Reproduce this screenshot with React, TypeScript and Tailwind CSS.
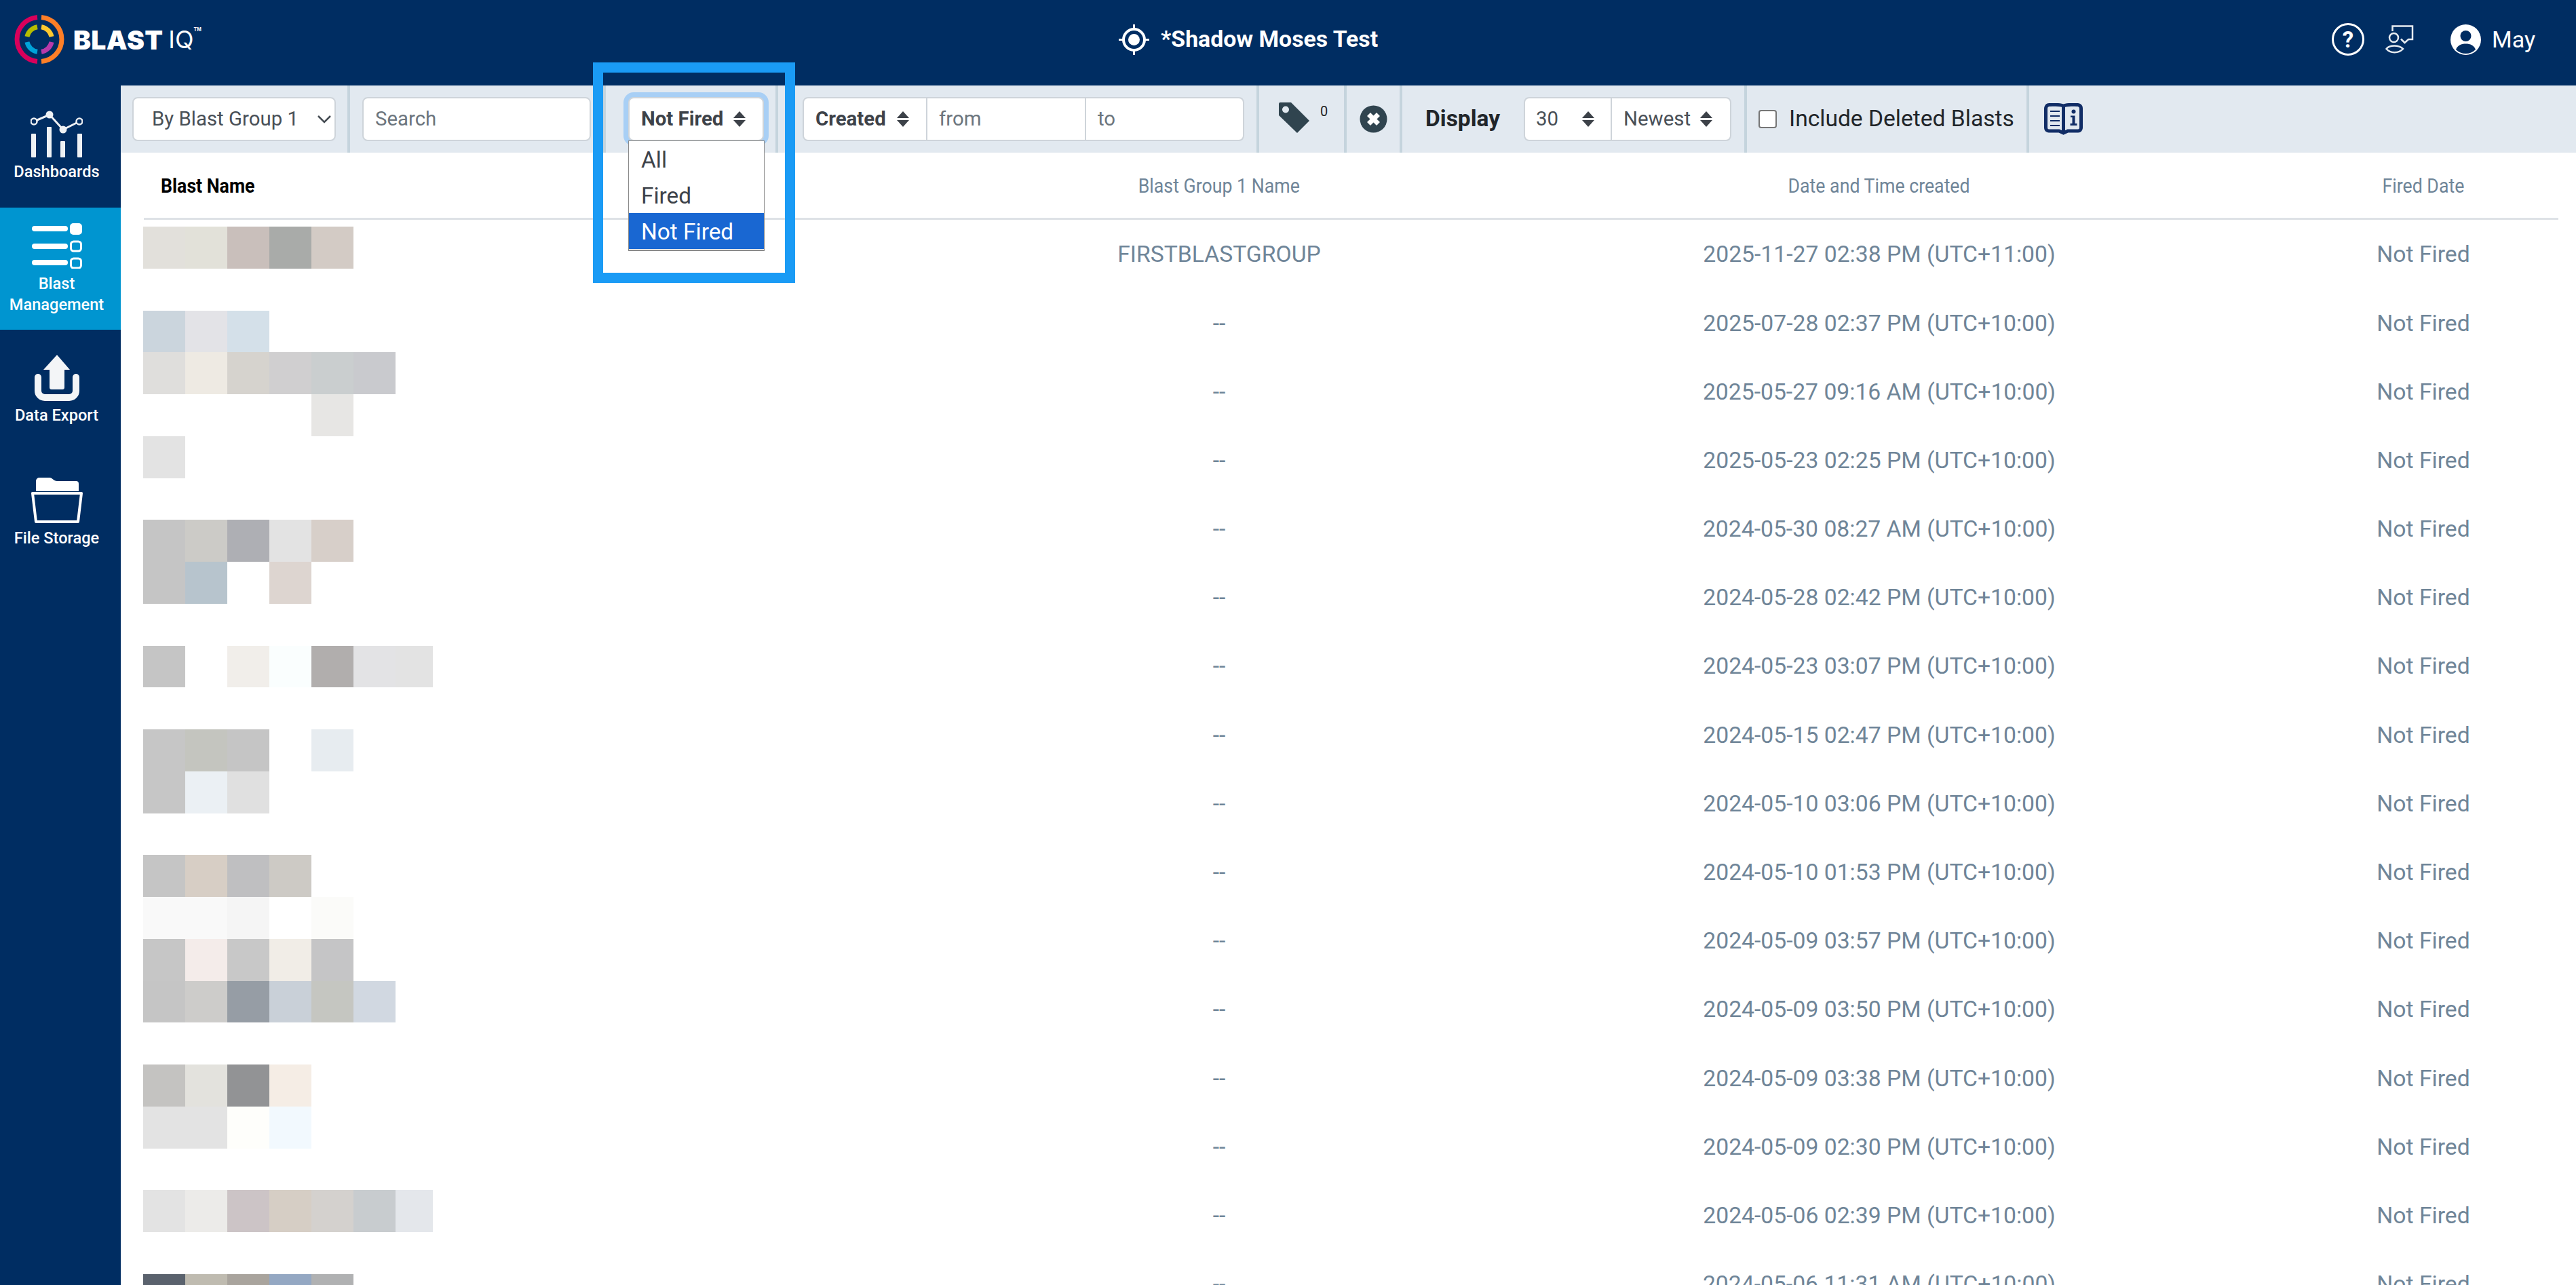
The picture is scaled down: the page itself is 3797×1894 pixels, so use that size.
import type { ReactNode } from "react";

const rows = [
  ["FIRSTBLASTGROUP", "2025-11-27 02:38 PM (UTC+11:00)"],
  ["--", "2025-07-28 02:37 PM (UTC+10:00)"],
  ["--", "2025-05-27 09:16 AM (UTC+10:00)"],
  ["--", "2025-05-23 02:25 PM (UTC+10:00)"],
  ["--", "2024-05-30 08:27 AM (UTC+10:00)"],
  ["--", "2024-05-28 02:42 PM (UTC+10:00)"],
  ["--", "2024-05-23 03:07 PM (UTC+10:00)"],
  ["--", "2024-05-15 02:47 PM (UTC+10:00)"],
  ["--", "2024-05-10 03:06 PM (UTC+10:00)"],
  ["--", "2024-05-10 01:53 PM (UTC+10:00)"],
  ["--", "2024-05-09 03:57 PM (UTC+10:00)"],
  ["--", "2024-05-09 03:50 PM (UTC+10:00)"],
  ["--", "2024-05-09 03:38 PM (UTC+10:00)"],
  ["--", "2024-05-09 02:30 PM (UTC+10:00)"],
  ["--", "2024-05-06 02:39 PM (UTC+10:00)"],
  ["--", "2024-05-06 11:31 AM (UTC+10:00)"],
];

// blurred-out blast names, one line per mosaic row
const mosaic: string[][] = [
  ["bg-[#e2e0db]", "bg-[#e2e1d9]", "bg-[#c9bfbb]", "bg-[#a9aba9]", "bg-[#d3cbc5]"],
  [],
  ["bg-[#cbd5dd]", "bg-[#e3e3e7]", "bg-[#d4e0e9]"],
  ["bg-[#dfdedc]", "bg-[#eeeae3]", "bg-[#d6d3ce]", "bg-[#d0cfd0]", "bg-[#cacecf]", "bg-[#c9cace]"],
  ["", "", "", "", "bg-[#e7e6e4]"],
  ["bg-[#e3e3e3]"],
  [],
  ["bg-[#c5c5c5]", "bg-[#cccbc7]", "bg-[#aeafb4]", "bg-[#e3e3e3]", "bg-[#d7cfc9]"],
  ["bg-[#c5c5c5]", "bg-[#b7c4cd]", "", "bg-[#ddd5d0]"],
  [],
  ["bg-[#c5c5c5]", "", "bg-[#f1eeea]", "bg-[#fafefe]", "bg-[#b1aead]", "bg-[#e3e3e5]", "bg-[#e3e3e3]"],
  [],
  ["bg-[#c6c6c6]", "bg-[#c4c5bf]", "bg-[#c5c5c5]", "", "bg-[#e7ecf0]"],
  ["bg-[#c6c6c6]", "bg-[#ebf0f4]", "bg-[#e0e0e0]"],
  [],
  ["bg-[#c5c5c5]", "bg-[#d7cec5]", "bg-[#bfbfc1]", "bg-[#cdcac5]"],
  ["bg-[#f9f9f9]", "bg-[#f9f9f9]", "bg-[#f5f5f5]", "", "bg-[#fbfbf9]"],
  ["bg-[#c6c6c6]", "bg-[#f4ecea]", "bg-[#c8c8c8]", "bg-[#f1ede7]", "bg-[#c5c5c6]"],
  ["bg-[#c5c5c5]", "bg-[#cdccca]", "bg-[#969da5]", "bg-[#c9d0d8]", "bg-[#c5c6c1]", "bg-[#d1d8e1]"],
  [],
  ["bg-[#c4c3c1]", "bg-[#e3e2dd]", "bg-[#929395]", "bg-[#f5ede5]"],
  ["bg-[#e3e3e3]", "bg-[#e3e3e3]", "bg-[#fefefb]", "bg-[#f2f9fe]"],
  [],
  ["bg-[#e3e3e3]", "bg-[#ecebe9]", "bg-[#ccc4c6]", "bg-[#d6cec5]", "bg-[#d4d1ce]", "bg-[#c8cccf]", "bg-[#e4e7eb]"],
  [],
  ["bg-[#5a626d]", "bg-[#bfbbb0]", "bg-[#a9a49d]", "bg-[#94a8c3]", "bg-[#b0b1b2]"],
];

function Logo() {
  return (
    <div className="flex items-center">
      <svg width="80" height="80" viewBox="0 0 80 80" fill="none" strokeWidth="7" className="ml-[18px] shrink-0">
        <path d="M37 7.6A32.5 32.5 0 0 0 37 72.4" stroke="#d9005b" />
        <path d="M43 7.6A32.5 32.5 0 0 1 43 72.4" stroke="#ff7f27" />
        <path d="M37 21.74A18.5 18.5 0 0 0 21.94 36" stroke="#b5bd00" />
        <path d="M43 21.74A18.5 18.5 0 0 1 58.06 36" stroke="#fdc82f" />
        <path d="M21.94 44A18.5 18.5 0 0 0 37 58.26" stroke="#00a3d9" />
        <path d="M58.06 44A18.5 18.5 0 0 1 43 58.26" stroke="#b83aaa" />
      </svg>
      <div className="ml-[10px] flex items-start font-['Inter',sans-serif] leading-none text-white">
        <span className="text-[39px] font-black tracking-[0.3px]">BLAST</span>
        <span className="ml-[8px] text-[36px] font-normal leading-[39px]">IQ</span>
        <span className="mt-[1px] text-[7px] font-bold">TM</span>
      </div>
    </div>
  );
}

function Header() {
  return (
    <header className="flex h-[126px] items-center bg-[#002d62] pb-[10px] text-white">
      <div className="w-[1649px] shrink-0">
        <Logo />
      </div>
      <div className="flex items-center">
        <svg width="45" height="45" viewBox="0 0 45 45" fill="none" stroke="white">
          <circle cx="22.5" cy="22.5" r="15.5" strokeWidth="4" />
          <circle cx="22.5" cy="22.5" r="8.5" fill="white" stroke="none" />
          <path d="M22.5 0V7M22.5 38V45M0 22.5H7M38 22.5H45" strokeWidth="3" />
        </svg>
        <span className="ml-[17px] text-[33.8px] font-bold">*Shadow Moses Test</span>
      </div>
      <div className="ml-auto flex items-center pr-[60px]">
        <div className="flex h-[48px] w-[48px] items-center justify-center rounded-full border-[3px] border-white text-[33px] font-bold leading-none">
          ?
        </div>
        <svg width="42" height="42" viewBox="0 0 42 42" fill="none" stroke="#e6ebf0" strokeWidth="2.5" className="ml-[31px]">
          <path d="M10.5 9V1.5H40V21H34L28.500 26 23 20.500" />
          <circle cx="12.500" cy="18.500" r="6.500" />
          <path d="M1.500 35C6 29 20 29 26 35 20 42 7 42 1.500 35Z" />
        </svg>
        <svg width="45" height="45" viewBox="0 0 45 45" className="ml-[54px]">
          <circle cx="22.500" cy="22.500" r="22.500" fill="white" />
          <circle cx="22.500" cy="17" r="8" fill="#002d62" />
          <path d="M8 37C10 31 16 28.500 22.500 28.500 29 28.500 35 31 37 37 33 41 28 43 22.500 43 17 43 12 41 8 37Z" fill="#002d62" />
        </svg>
        <span className="ml-[16px] text-[34px]">May</span>
      </div>
    </header>
  );
}

function NavItem({ icon, label, active, className }: { icon: ReactNode; label: ReactNode; active?: boolean; className: string }) {
  return (
    <div className={`flex flex-col items-center pr-[11px] text-center text-[23.6px] font-medium leading-[31px] text-white ${active ? "bg-[#0095d0]" : ""} ${className}`}>
      {icon}
      {label}
    </div>
  );
}

function Sidebar() {
  return (
    <aside className="w-[178px] shrink-0 bg-[#002d62]">
      <NavItem
        className="h-[180px] pt-[37px]"
        label={<span className="mt-[5px]">Dashboards</span>}
        icon={
          <svg width="77" height="70" viewBox="0 0 77 70">
            <path d="M5 16L28 6 48 28 72 16" fill="none" stroke="#eef1f4" strokeWidth="3" />
            <circle cx="5" cy="16" r="4.500" fill="#002d62" stroke="#eef1f4" strokeWidth="2.500" />
            <circle cx="28" cy="6" r="5.500" fill="#eef1f4" />
            <circle cx="48" cy="28" r="5.500" fill="#eef1f4" />
            <circle cx="72" cy="16" r="4.500" fill="#002d62" stroke="#eef1f4" strokeWidth="2.500" />
            <g fill="#eef1f4">
              <rect x="1" y="34" width="7" height="35" rx="1" />
              <rect x="24" y="24" width="7" height="45" rx="1" />
              <rect x="44" y="45" width="7" height="24" rx="1" />
              <rect x="69" y="34" width="7" height="35" rx="1" />
            </g>
          </svg>
        }
      />
      <NavItem
        active
        className="h-[180px] pt-[23px]"
        label={<span className="mt-[7px]">Blast<br />Management</span>}
        icon={
          <svg width="74" height="67" viewBox="0 0 74 67" fill="white">
            <rect x="0" y="4" width="53" height="8" rx="4" />
            <rect x="0" y="30" width="53" height="8" rx="4" />
            <rect x="0" y="54" width="53" height="8" rx="4" />
            <rect x="56" y="0" width="18" height="17" rx="5" />
            <rect x="57.500" y="27" width="15" height="14" rx="4" fill="none" stroke="white" strokeWidth="3" />
            <rect x="57.500" y="52" width="15" height="14" rx="4" fill="none" stroke="white" strokeWidth="3" />
          </svg>
        }
      />
      <NavItem
        className="h-[180px] pt-[37px]"
        label={<span className="mt-[6px]">Data Export</span>}
        icon={
          <svg width="66" height="68" viewBox="0 0 66 68" fill="#f3f5f7">
            <path d="M5 33V53A10 10 0 0 0 15 63H51A10 10 0 0 0 61 53V33" fill="none" stroke="#f3f5f7" strokeWidth="10" strokeLinecap="round" />
            <path d="M33 0L52 22H44V48A3 3 0 0 1 41 51H25A3 3 0 0 1 22 48V22H13Z" />
          </svg>
        }
      />
      <NavItem
        className="pt-[38px]"
        label={<span className="mt-[7px]">File Storage</span>}
        icon={
          <svg width="76" height="67" viewBox="0 0 76 67">
            <path d="M7 20V5A5 5 0 0 1 12 0H27C31 0 33 5 38 5H66A4 4 0 0 1 70 9V20Z" fill="white" />
            <path d="M2 23H74L69 65H7Z" fill="none" stroke="white" strokeWidth="4" strokeLinejoin="round" />
          </svg>
        }
      />
    </aside>
  );
}

function Sort() {
  return (
    <svg width="18" height="23" viewBox="0 0 18 23" fill="#3d4249" className="shrink-0">
      <path d="M9 0L18 10H0Z" />
      <path d="M0 13H18L9 23Z" />
    </svg>
  );
}

function Section({ className, children }: { className: string; children?: ReactNode }) {
  return <div className={`flex h-full shrink-0 items-center border-r-4 border-[#c5d4dd] ${className}`}>{children}</div>;
}

const box = "flex h-[65px] items-center rounded-[8px] border-2 border-[#ced4da] bg-white";

function Toolbar() {
  return (
    <div className="flex h-[99px] bg-[#e2e9f0] text-[29.4px]">
      <Section className="w-[338px] pl-[17px]">
        <div className={`${box} w-[300px] pl-[27px] text-[#495057]`}>
          By Blast Group 1
          <svg width="20" height="12" viewBox="0 0 20 12" fill="none" stroke="#444b52" strokeWidth="2.500" className="ml-[28px]">
            <path d="M1 1L10 10 19 1" />
          </svg>
        </div>
      </Section>
      <Section className="w-[377px] pl-[18px]">
        <div className={`${box} w-[337px] pl-[17px] text-[#6c757d]`}>Search</div>
      </Section>
      <Section className="w-[254px] pl-[33px]">
        <div className="relative z-10">
          <div className={`${box} w-[200px] pl-[17px] font-bold text-[#3d4249] shadow-[0_0_0_7px_#a8cff5]`}>
            Not Fired
            <span className="ml-[15px] flex">
              <Sort />
            </span>
          </div>
          <ul className="absolute left-0 top-[64px] w-[201px] border border-b-2 border-[#8a8a8a] bg-white pb-px text-[33.4px] text-[#3d4249]">
            <li className="flex h-[53px] items-center pl-[18px] pt-[3px]">All</li>
            <li className="flex h-[53px] items-center pl-[18px] pt-[3px]">Fired</li>
            <li className="flex h-[53px] items-center bg-[#1967d2] pl-[18px] pt-[3px] text-white">Not Fired</li>
          </ul>
        </div>
      </Section>
      <Section className="w-[709px] pl-[36px]">
        <div className={`${box} w-[651px] text-[#6c757d]`}>
          <div className="flex h-full w-[182px] items-center border-r-2 border-[#ced4da] pl-[17px] font-bold text-[#3d4249]">
            Created
            <span className="ml-[16px] flex">
              <Sort />
            </span>
          </div>
          <div className="flex h-full w-[234px] items-center border-r-2 border-[#ced4da] pl-[17px]">from</div>
          <div className="pl-[17px]">to</div>
        </div>
      </Section>
      <Section className="w-[129px] pl-[29px]">
        <svg width="46" height="46" viewBox="0 0 46 46" className="mb-[3px] shrink-0">
          <path fillRule="evenodd" fill="#30444f" d="M2 0H18L45 27 27 45 0 19V2A2 2 0 0 1 2 0ZM10 5.500A5 5 0 1 0 10 15.500 5 5 0 0 0 10 5.500Z" />
        </svg>
        <span className="mb-[24px] ml-[15px] text-[20px] leading-none text-[#222]">0</span>
      </Section>
      <Section className="w-[82px] pl-[19px]">
        <svg width="41" height="41" viewBox="0 0 41 41">
          <circle cx="20.500" cy="20.500" r="20" fill="#30444f" />
          <path d="M13.500 13.500L27.500 27.500M27.500 13.500L13.500 27.500" stroke="white" strokeWidth="7" />
        </svg>
      </Section>
      <Section className="w-[508px] pl-[34px]">
        <span className="w-[145px] text-[33.5px] font-bold text-[#212529]">Display</span>
        <div className={`${box} w-[306px] text-[#495057]`}>
          <div className="flex h-full w-[128px] items-center border-r-2 border-[#ced4da] pl-[16px]">
            30
            <span className="ml-[35px] flex"><Sort /></span>
          </div>
          <div className="flex items-center pl-[17px]">
            Newest
            <span className="ml-[14px] flex"><Sort /></span>
          </div>
        </div>
      </Section>
      <Section className="w-[416px] pl-[17px] text-[#212529]">
        <span className="h-[27px] w-[27px] rounded-[4px] border-2 border-[#767676] bg-white" />
        <span className="ml-[18px] text-[33.6px]">Include Deleted Blasts</span>
      </Section>
      <div className="ml-[22px] flex items-center">
        <svg width="57" height="47" viewBox="0 0 57 47" fill="none" stroke="#112d66">
          <path d="M28.500 4C24 2 10 2 7 2.500 2.500 3 2.500 8 2.500 8V36C2.500 41 7 41 7 41H22L28.500 44 35 41H50C54.500 41 54.500 36 54.500 36V8C54.500 3 50 2.500 50 2.500 47 2 33 2 28.500 4ZM28.500 4V43" strokeWidth="5" />
          <path d="M9 12H23M9 19H23M9 26H23M9 33H23" strokeWidth="1.800" />
          <circle cx="43.500" cy="12.500" r="3" fill="#112d66" stroke="none" />
          <path d="M39 18.500H45.500V30H48.500V33H38.500V30H41.500V21H39Z" fill="#112d66" stroke="none" />
        </svg>
      </div>
    </div>
  );
}

function Mosaic() {
  return (
    <div className="absolute left-[33px] top-[208px]">
      {mosaic.map((line, i) => (
        <div key={i} className="flex h-[61.76px]">
          {line.map((cell, j) => (
            <div key={j} className={`h-full ${j === 6 ? "w-[55px]" : "w-[62px]"} ${cell}`} />
          ))}
        </div>
      ))}
    </div>
  );
}

function HeadCell({ children }: { children: ReactNode }) {
  // the reference sets these headings in a narrower cut than Roboto
  return <span className="inline-block scale-x-[0.89]">{children}</span>;
}

function BlastTable() {
  return (
    <div className="ml-[34px] w-[3559px]">
      <div className="mb-px grid h-[99px] grid-cols-[1215px_740px_1206px_398px] items-center border-b-[3px] border-[#dee2e6] text-center text-[30px] text-[#6f8598]">
        <div className="pl-[25px] text-left font-bold text-black">
          <span className="inline-block origin-left scale-x-[0.89]">Blast Name</span>
        </div>
        <div><HeadCell>Blast Group 1 Name</HeadCell></div>
        <div><HeadCell>Date and Time created</HeadCell></div>
        <div><HeadCell>Fired Date</HeadCell></div>
      </div>
      {rows.map(([group, date]) => (
        <div key={date} className="grid h-[101.2px] grid-cols-[1215px_740px_1206px_398px] items-center text-center text-[33.7px] text-[#6f8598]">
          <div />
          <div>{group}</div>
          <div>{date}</div>
          <div>Not Fired</div>
        </div>
      ))}
    </div>
  );
}

export default function App() {
  return (
    <div className="relative h-[1894px] w-[3797px] overflow-hidden bg-white font-['Roboto',sans-serif]">
      <Header />
      <div className="flex h-[1768px]">
        <Sidebar />
        <main className="relative min-w-0 flex-1">
          <Toolbar />
          <Mosaic />
          <BlastTable />
        </main>
      </div>
      {/* callout box drawn on the screenshot */}
      <div className="pointer-events-none absolute left-[874px] top-[92px] z-20 h-[325px] w-[298px] border-[15px] border-[#1a9bf5]" />
    </div>
  );
}
